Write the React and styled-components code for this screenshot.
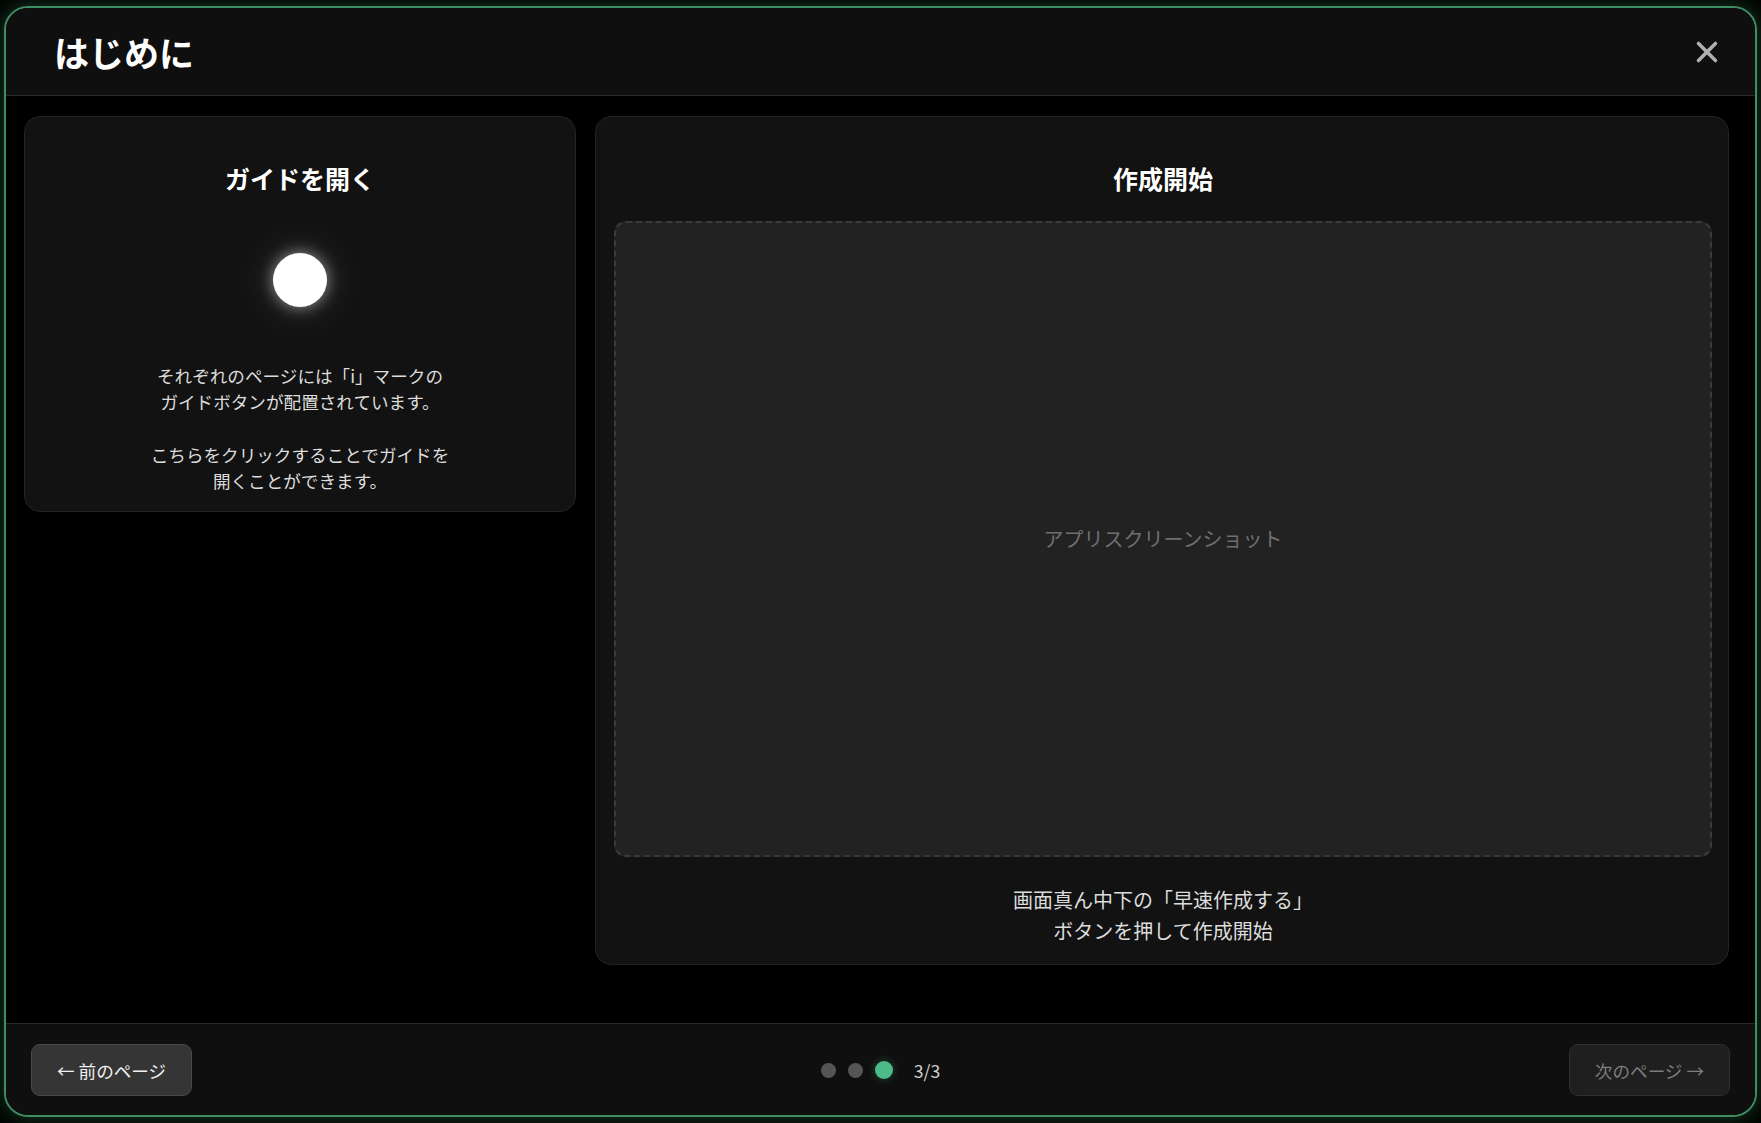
import React from 'react';
import styled, { createGlobalStyle } from 'styled-components';
import { X } from 'lucide-react';

const GlobalStyle = createGlobalStyle`
  * {
    box-sizing: border-box;
  }

  html, body {
    margin: 0;
    padding: 0;
    background: #000;
    font-family: "Noto Sans CJK JP", "Noto Sans", sans-serif;
    color: #ddd;
  }
`;

const Overlay = styled.div`
  height: 100vh;
  padding: 6px 4px;
  background: #020503;
  display: flex;
`;

const Modal = styled.div`
  flex: 1;
  display: flex;
  flex-direction: column;
  border: 2px solid #3f8d62;
  border-radius: 24px;
  overflow: hidden;
  background: #000;
  box-shadow: 0 0 18px rgba(63, 141, 98, 0.4);
`;

const Header = styled.header`
  height: 88px;
  flex-shrink: 0;
  display: flex;
  align-items: center;
  justify-content: space-between;
  padding: 0 31px 0 48px;
  background: #0f0f0f;
  border-bottom: 1px solid #2a2a2a;
`;

const Title = styled.h1`
  margin: 0;
  font-size: 35px;
  font-weight: 700;
  color: #fff;
  line-height: 1;
`;

const CloseButton = styled.button`
  width: 34px;
  height: 34px;
  padding: 0;
  border: none;
  background: transparent;
  color: #b0b0b0;
  display: flex;
  align-items: center;
  justify-content: center;
  cursor: pointer;
`;

const Body = styled.main`
  flex: 1;
  display: grid;
  grid-template-columns: 552px 1fr;
  gap: 19px;
  align-items: start;
  padding: 20px 26px 20px 18px;
`;

const Card = styled.section`
  display: flex;
  flex-direction: column;
  align-items: center;
  padding: ${(p) => p.$padding || '20px'};
  background: #121212;
  border: 1px solid #232323;
  border-radius: 16px;
`;

const CardTitle = styled.h2`
  margin: 23px 0 0;
  font-size: 25px;
  font-weight: 700;
  line-height: 1.5;
  color: #fff;
`;

const Glow = styled.div`
  width: 54px;
  height: 54px;
  margin: 55px 0 56px;
  border-radius: 50%;
  background: #fff;
  box-shadow: 0 0 16px rgba(255, 255, 255, 0.55), 0 0 48px rgba(255, 255, 255, 0.14);
`;

const Description = styled.p`
  margin: ${(p) => p.$margin || '0'};
  font-size: ${(p) => p.$size || '17.6px'};
  line-height: ${(p) => p.$lineHeight || 1.5};
  text-align: center;
  color: #dcdcdc;
`;

const Screenshot = styled.div`
  align-self: stretch;
  height: 636px;
  margin-top: 23px;
  display: flex;
  align-items: center;
  justify-content: center;
  background: #222;
  border: 2px dashed #3a3a3a;
  border-radius: 12px;
  font-size: 20px;
  color: #6f6f6f;
`;

const Footer = styled.footer`
  flex-shrink: 0;
  display: grid;
  grid-template-columns: 1fr auto 1fr;
  align-items: center;
  padding: 20px 25px 19px;
  background: #0f0f0f;
  border-top: 1px solid #2a2a2a;
`;

const NavButton = styled.button`
  justify-self: ${(p) => (p.$next ? 'end' : 'start')};
  height: 52px;
  padding: 0 25px;
  font-family: inherit;
  font-size: 17.6px;
  border-radius: 9px;
  cursor: ${(p) => (p.$disabled ? 'default' : 'pointer')};
  background: ${(p) => (p.$disabled ? '#1f1f1f' : '#353535')};
  border: 1px solid ${(p) => (p.$disabled ? '#2f2f2f' : '#4a4a4a')};
  color: ${(p) => (p.$disabled ? '#7d7d7d' : '#f0f0f0')};
`;

const Pager = styled.div`
  display: flex;
  align-items: center;
  gap: 12px;
`;

const Dot = styled.span`
  width: ${(p) => (p.$active ? '18px' : '15px')};
  height: ${(p) => (p.$active ? '18px' : '15px')};
  border-radius: 50%;
  background: ${(p) => (p.$active ? '#4fba89' : '#555')};
  box-shadow: ${(p) => (p.$active ? '0 0 10px rgba(79, 186, 137, 0.35)' : 'none')};
`;

const PageCount = styled.span`
  margin-left: 9px;
  font-size: 17.6px;
  color: #cfcfcf;
`;

export default function App() {
  const pages = [0, 1, 2];
  const current = 2;

  return (
    <>
      <GlobalStyle />
      <Overlay>
        <Modal>
          <Header>
            <Title>はじめに</Title>
            <CloseButton aria-label="閉じる">
              <X size={34} strokeWidth={2.5} />
            </CloseButton>
          </Header>

          <Body>
            <Card $padding="20px 20px 17px">
              <CardTitle>ガイドを開く</CardTitle>
              <Glow />
              <Description>
                それぞれのページには「i」マークの
                <br />
                ガイドボタンが配置されています。
                <br />
                <br />
                こちらをクリックすることでガイドを
                <br />
                開くことができます。
              </Description>
            </Card>

            <Card $padding="20px 16px 18px 18px">
              <CardTitle>作成開始</CardTitle>
              <Screenshot>アプリスクリーンショット</Screenshot>
              <Description $size="20px" $lineHeight={1.55} $margin="27px 0 0">
                画面真ん中下の「早速作成する」
                <br />
                ボタンを押して作成開始
              </Description>
            </Card>
          </Body>

          <Footer>
            <NavButton>← 前のページ</NavButton>
            <Pager>
              {pages.map((p) => (
                <Dot key={p} $active={p === current} />
              ))}
              <PageCount>
                {current + 1}/{pages.length}
              </PageCount>
            </Pager>
            <NavButton $next $disabled>
              次のページ →
            </NavButton>
          </Footer>
        </Modal>
      </Overlay>
    </>
  );
}
